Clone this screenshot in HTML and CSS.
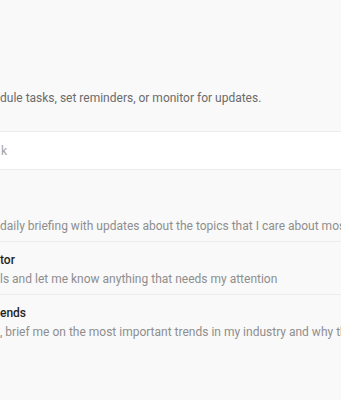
FILE: index.html
```html
<!DOCTYPE html>
<html lang="en">
<head>
<meta charset="utf-8">
<title>Tasks</title>
<link rel="stylesheet" href="styles.css">
</head>
<body>
<main class="page">
  <p class="subtitle">dule tasks, set reminders, or monitor for updates.</p>
  <div class="input-box"><span class="placeholder">k</span></div>
  <ul class="suggestions">
    <li class="row">
      <div class="row-title">&nbsp;</div>
      <div class="row-desc">daily briefing with updates about the topics that I care about most</div>
    </li>
    <li class="row">
      <div class="row-title">tor</div>
      <div class="row-desc">ls and let me know anything that needs my attention</div>
    </li>
    <li class="row">
      <div class="row-title">ends</div>
      <div class="row-desc">, brief me on the most important trends in my industry and why they matter</div>
    </li>
  </ul>
</main>
</body>
</html>
```

FILE: styles.css
```css
html, body {
  margin: 0;
  padding: 0;
  background: #f9f9f9;
  overflow: hidden;
}
body {
  font-family: Roboto, "Noto Sans", sans-serif;
  font-size: 12px;
  color: #1f1f1f;
}
.page {
  width: 341px;
  height: 400px;
  overflow: hidden;
  padding-top: 89px;
  box-sizing: border-box;
}
.subtitle {
  margin: 0;
  line-height: 18px;
  color: #6b6b6b;
  white-space: nowrap;
}
.input-box {
  margin-top: 24px;
  margin-left: -20px;
  width: 420px;
  height: 37px;
  background: #ffffff;
  border: 1px solid #ececec;
  display: flex;
  align-items: center;
  padding-left: 20px;
  box-sizing: content-box;
}
.placeholder {
  color: #a3a3a3;
}
.suggestions {
  list-style: none;
  margin: 19px 0 0;
  padding: 0;
}
.row {
  padding: 9px 0 5px;
  border-bottom: 1px solid #ececec;
  white-space: nowrap;
  width: 420px;
}
.row:last-child {
  border-bottom: none;
}
.row-title {
  line-height: 18px;
  font-weight: 500;
  color: #1f1f1f;
}
.row-desc {
  line-height: 20px;
  color: #8e8e8e;
}
```
